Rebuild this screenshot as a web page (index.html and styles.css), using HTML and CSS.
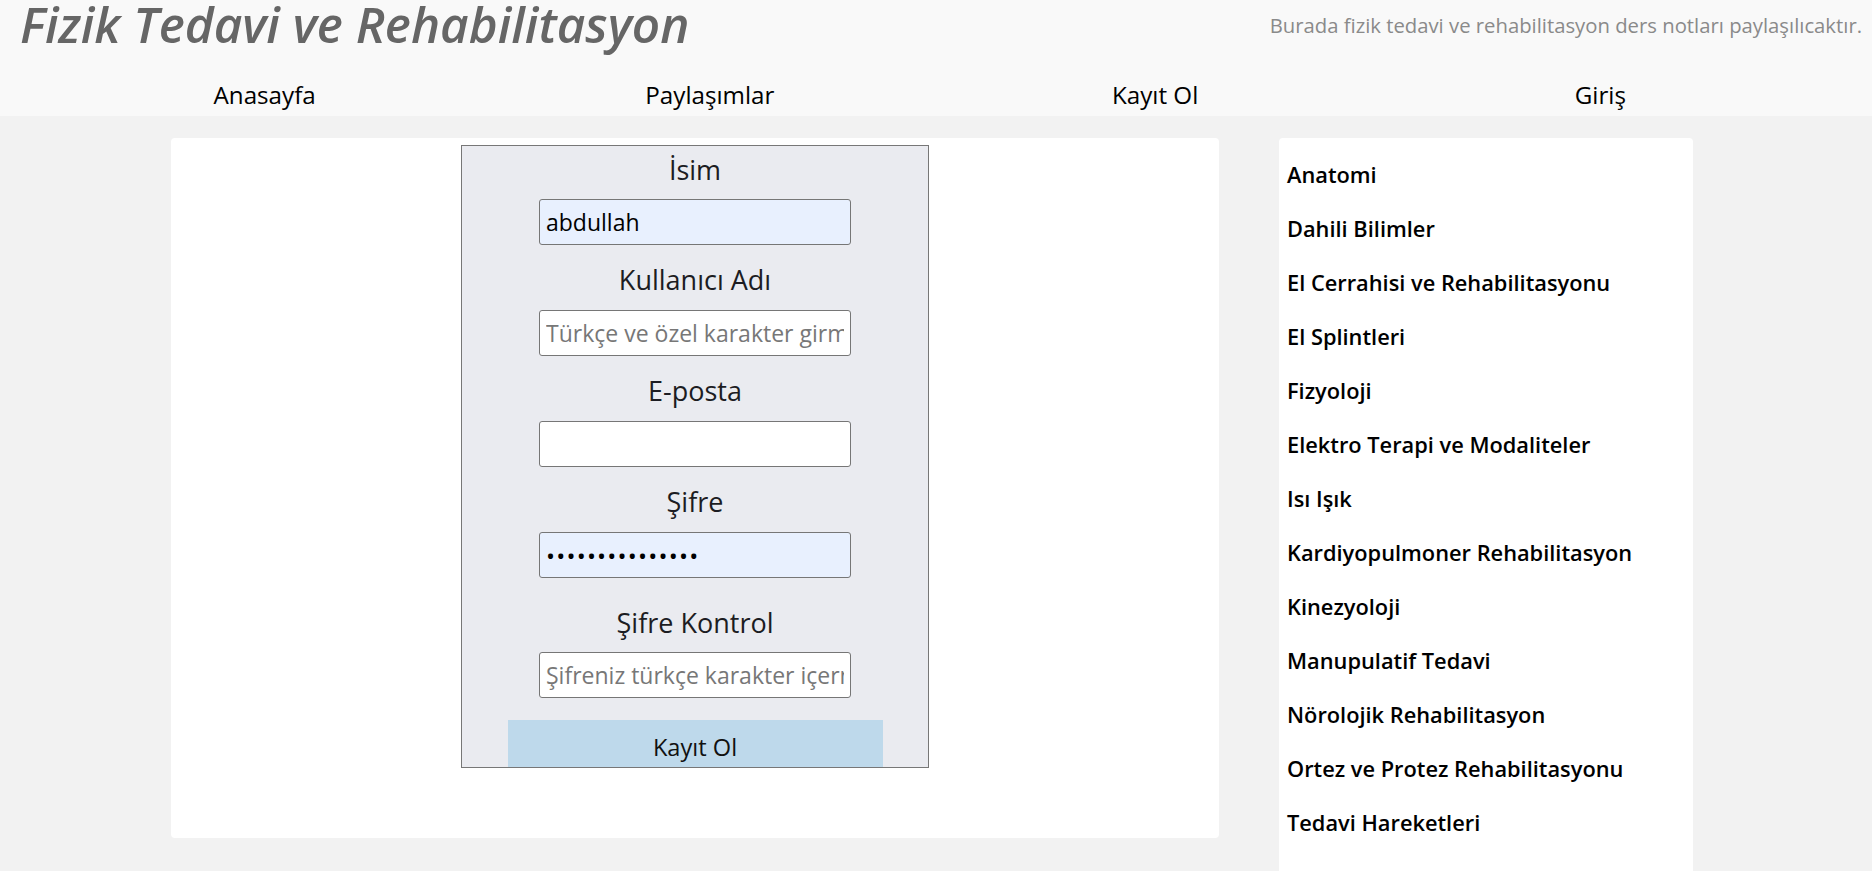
FILE: index.html
```html
<!DOCTYPE html>
<html lang="tr">
<head>
<meta charset="utf-8">
<title>Fizik Tedavi ve Rehabilitasyon</title>
<link rel="stylesheet" href="styles.css">
</head>
<body>
<header class="site-header">
  <div class="brand-row">
    <h1 class="brand-title">Fizik Tedavi ve Rehabilitasyon</h1>
    <p class="brand-sub">Burada fizik tedavi ve rehabilitasyon ders notları paylaşılıcaktır.</p>
  </div>
  <nav class="main-nav">
    <a class="nav-link" href="#">Anasayfa</a>
    <a class="nav-link" href="#">Paylaşımlar</a>
    <a class="nav-link" href="#">Kayıt Ol</a>
    <a class="nav-link" href="#">Giriş</a>
  </nav>
</header>
<main class="page">
  <section class="content-card">
    <form class="register-form">
      <label class="form-label form-label-first">İsim</label>
      <input class="form-field form-field-filled" type="text" value="abdullah">
      <label class="form-label">Kullanıcı Adı</label>
      <input class="form-field" type="text" placeholder="Türkçe ve özel karakter girmeyiniz">
      <label class="form-label">E-posta</label>
      <input class="form-field" type="email">
      <label class="form-label">Şifre</label>
      <input class="form-field form-field-filled form-field-pass" type="password" value="abcdefghijklmno">
      <label class="form-label form-label-spaced">Şifre Kontrol</label>
      <input class="form-field" type="password" placeholder="Şifreniz türkçe karakter içermemelidir">
      <button class="form-button" type="button">Kayıt Ol</button>
    </form>
  </section>
  <aside class="side-menu">
    <a class="side-link" href="#">Anatomi</a>
    <a class="side-link" href="#">Dahili Bilimler</a>
    <a class="side-link" href="#">El Cerrahisi ve Rehabilitasyonu</a>
    <a class="side-link" href="#">El Splintleri</a>
    <a class="side-link" href="#">Fizyoloji</a>
    <a class="side-link" href="#">Elektro Terapi ve Modaliteler</a>
    <a class="side-link" href="#">Isı Işık</a>
    <a class="side-link" href="#">Kardiyopulmoner Rehabilitasyon</a>
    <a class="side-link" href="#">Kinezyoloji</a>
    <a class="side-link" href="#">Manupulatif Tedavi</a>
    <a class="side-link" href="#">Nörolojik Rehabilitasyon</a>
    <a class="side-link" href="#">Ortez ve Protez Rehabilitasyonu</a>
    <a class="side-link" href="#">Tedavi Hareketleri</a>
  </aside>
</main>
</body>
</html>
```
FILE: styles.css
```css
* { box-sizing: border-box; }

html, body {
  margin: 0;
  padding: 0;
}

body {
  background: #f2f2f2;
  font-family: "Open Sans", "Noto Sans", sans-serif;
  color: #000;
  overflow: hidden;
}

.site-header {
  background: #f9f9f9;
  height: 116px;
}

.brand-row {
  display: flex;
  justify-content: space-between;
  align-items: flex-start;
  height: 50px;
}

.brand-title {
  margin: 0;
  padding: 0 0 0 20px;
  font-size: 49.4px;
  line-height: 48px;
  font-style: italic;
  font-weight: 600;
  color: #666;
  white-space: nowrap;
}

.brand-sub {
  margin: 0;
  padding: 12px 10px 0 0;
  font-size: 20.3px;
  line-height: 26px;
  color: #8a8a8a;
  white-space: nowrap;
}

.main-nav {
  display: grid;
  grid-template-columns: repeat(4, 445.25px);
  padding: 29px 0 0 42px;
}

.nav-link {
  text-align: center;
  font-size: 24.2px;
  line-height: 32px;
  font-weight: 500;
  color: #000;
  text-decoration: none;
}

.page {
  display: flex;
  align-items: flex-start;
  gap: 60px;
  padding: 22px 0 0 171px;
}

.content-card {
  width: 1048px;
  height: 700px;
  background: #fff;
  border-radius: 4px;
  padding-top: 7px;
}

.register-form {
  width: 468px;
  height: 623px;
  margin: 0 auto;
  background: #eaebf0;
  border: 1px solid #777;
  padding-top: 8px;
  display: flex;
  flex-direction: column;
  align-items: center;
  overflow: hidden;
}

.form-label {
  display: block;
  margin-top: 19px;
  font-size: 27px;
  line-height: 32px;
  color: #1c1c22;
  text-align: center;
}

.form-label-first { margin-top: 0; }
.form-label-spaced { margin-top: 29px; }

.form-field {
  display: block;
  width: 312px;
  height: 46px;
  margin-top: 14px;
  padding: 0 6px;
  border: 1px solid #767676;
  border-radius: 3px;
  background: #fff;
  font-family: "Open Sans", "Noto Sans", sans-serif;
  font-size: 23px;
  color: #000;
  outline: none;
}

.form-label-first + .form-field { margin-top: 13px; }
.form-label-spaced + .form-field { margin-top: 13px; }

.form-field::placeholder { color: #777; }

.form-field-filled { background: #e8f0fe; }

.form-field-pass {
  font-size: 24px;
  letter-spacing: 1.2px;
}

.form-button {
  display: block;
  width: 375px;
  height: 47px;
  margin-top: 22px;
  flex-shrink: 0;
  border: 0;
  background: #bed9eb;
  font-family: "Open Sans", "Noto Sans", sans-serif;
  font-size: 23.6px;
  color: #111;
  padding: 6px 0 0;
}

.side-menu {
  width: 414px;
  min-height: 760px;
  background: #fff;
  border-radius: 4px 4px 0 0;
  padding: 10px 8px 40px;
  display: flex;
  flex-direction: column;
}

.side-link {
  display: block;
  font-size: 21.8px;
  line-height: 54px;
  font-weight: 600;
  color: #000;
  text-decoration: none;
  white-space: nowrap;
}
```
